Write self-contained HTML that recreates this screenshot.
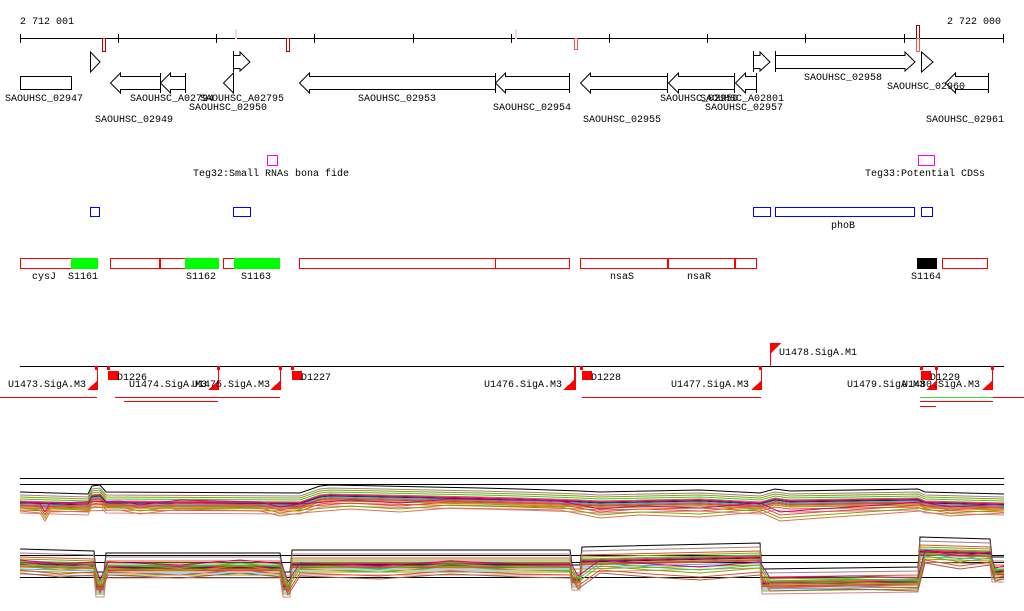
<!DOCTYPE html>
<html><head><meta charset="utf-8"><style>
html,body{margin:0;padding:0;background:#fff;width:1024px;height:611px;overflow:hidden}
svg{display:block}
text{font-family:"Liberation Mono",monospace;font-size:10px;fill:#000}
</style></head><body>
<svg width="1024" height="611" viewBox="0 0 1024 611" xmlns="http://www.w3.org/2000/svg">
<defs>
<path id="tb" d="M20,500 L88,502 L92,494 L100,493 L106,500 L300,501 L320,494 L330,493 L480,496 L520,497 L580,499 L600,500 L700,498 L760,501 L775,497 L790,499 L918,497 L925,500 L1004,502" fill="none"/>
<path id="bb" d="M20,563 L94,565 L96,586 L104,586 L106,567 L280,567 L283,586 L290,586 L292,564 L570,564 L572,579 L580,579 L582,561 L760,557 L762,583 L918,581 L920,551 L990,553 L992,571 L1004,571" fill="none"/>
<path id="tn" d="M20,505 L40,507 L45,515 L50,506 L120,504 L140,508 L180,503 L260,505 L280,510 L300,507 L350,503 L400,506 L450,502 L560,504 L600,512 L640,509 L700,511 L760,506 L780,515 L820,512 L880,508 L920,505 L950,510 L1004,507" fill="none"/>
<path id="bn" d="M20,570 L60,574 L94,572 L100,590 L108,572 L180,575 L240,570 L282,574 L288,592 L300,573 L380,576 L450,571 L520,574 L572,575 L578,586 L600,570 L650,574 L700,577 L760,572 L770,588 L850,586 L918,588 L925,560 L960,566 L990,562 L995,578 L1004,576" fill="none"/>
</defs>
<text x="20" y="24">2 712 001</text>
<text x="947" y="24">2 722 000</text>
<g stroke="#000" stroke-width="1" fill="none" shape-rendering="crispEdges">
<path d="M20,38.5H1004"/>
<path d="M20.5,34V43M118.5,34V43M216.5,34V43M314.5,34V43M413.5,34V43M511.5,34V43M609.5,34V43M707.5,34V43M805.5,34V43M904.5,34V43M1003.5,34V43"/>
</g>
<g shape-rendering="crispEdges" fill="none">
<rect x="235.5" y="29.5" width="1" height="9" stroke="#f8d8c8"/>
<rect x="515.5" y="29.5" width="1" height="9" stroke="#f8d8c8"/>
<rect x="102.5" y="38.5" width="3" height="13" stroke="#b00"/>
<rect x="286.5" y="38.5" width="3" height="13" stroke="#b00"/>
<rect x="574.5" y="38.5" width="3" height="11" stroke="#f54"/>
<rect x="916.5" y="25.5" width="3" height="13" stroke="#a00"/>
<rect x="916.5" y="38.5" width="3" height="13" stroke="#f54"/>
</g>
<g stroke="#000" fill="#fff" stroke-width="1">
<rect x="20.5" y="76.5" width="51" height="13"/>
<path d="M90.5,52V72L100,62Z"/>
<path d="M160.5,73V93M160.5,76.5H120.5V73L110.5,83L120.5,93V89.5H160.5"/>
<path d="M185.5,73V93M185.5,76.5H170.5V73L160.5,83L170.5,93V89.5H185.5"/>
<path d="M233.5,73V93L223.5,83Z"/>
<path d="M233.5,51V72M233.5,55.5H240V52L250,62L240,71V68.5H233.5"/>
<path d="M495.5,73V93M495.5,76.5H309.5V73L299.5,83L309.5,93V89.5H495.5"/>
<path d="M569.5,73V93M569.5,76.5H505.5V73L495.5,83L505.5,93V89.5H569.5"/>
<path d="M667.5,73V93M667.5,76.5H590.5V73L580.5,83L590.5,93V89.5H667.5"/>
<path d="M734.5,73V93M734.5,76.5H678.5V73L668.5,83L678.5,93V89.5H734.5"/>
<path d="M756.5,73V93M756.5,76.5H745.5V73L735.5,83L745.5,93V89.5H756.5"/>
<path d="M753.5,51V72M753.5,55.5H760V52L770,62L760,71V68.5H753.5"/>
<path d="M775.5,51V72M775.5,55.5H905V52L915,62L905,71V68.5H775.5"/>
<path d="M921.5,52V72L933,62Z"/>
<path d="M988.5,73V93M988.5,76.5H955.5V73L945.5,83L955.5,93V89.5H988.5"/>
</g>
<text x="5" y="101">SAOUHSC_02947</text>
<text x="130" y="101">SAOUHSC_A02794</text>
<text x="200" y="101">SAOUHSC_A02795</text>
<text x="189" y="110">SAOUHSC_02950</text>
<text x="95" y="122">SAOUHSC_02949</text>
<text x="358" y="101">SAOUHSC_02953</text>
<text x="493" y="110">SAOUHSC_02954</text>
<text x="583" y="122">SAOUHSC_02955</text>
<text x="660" y="101">SAOUHSC_02956</text>
<text x="700" y="101">SAOUHSC_A02801</text>
<text x="705" y="110">SAOUHSC_02957</text>
<text x="804" y="80">SAOUHSC_02958</text>
<text x="887" y="89">SAOUHSC_02960</text>
<text x="926" y="122">SAOUHSC_02961</text>

<g fill="none" shape-rendering="crispEdges">
<rect x="267.5" y="155.5" width="10" height="10" stroke="#f0f"/>
<rect x="918.5" y="155.5" width="16" height="10" stroke="#f0f"/>
<g stroke="#00f">
<rect x="90.5" y="207.5" width="9" height="9"/>
<rect x="233.5" y="207.5" width="17" height="9"/>
<rect x="753.5" y="207.5" width="17" height="9"/>
<rect x="775.5" y="207.5" width="139" height="9"/>
<rect x="921.5" y="207.5" width="11" height="9"/>
</g>
<g stroke="#f00">
<rect x="20.5" y="258.5" width="51" height="10"/>
<rect x="110.5" y="258.5" width="49" height="10"/>
<rect x="160.5" y="258.5" width="25" height="10"/>
<rect x="223.5" y="258.5" width="11" height="10"/>
<rect x="299.5" y="258.5" width="196" height="10"/>
<rect x="495.5" y="258.5" width="74" height="10"/>
<rect x="580.5" y="258.5" width="87" height="10"/>
<rect x="668.5" y="258.5" width="66" height="10"/>
<rect x="735.5" y="258.5" width="21" height="10"/>
<rect x="942.5" y="258.5" width="45" height="10"/>
</g>
</g>
<g fill="#0f0" shape-rendering="crispEdges">
<rect x="71" y="258" width="27" height="11"/>
<rect x="185" y="258" width="34" height="11"/>
<rect x="234" y="258" width="46" height="11"/>
</g>
<rect x="917" y="258" width="20" height="11" fill="#000"/>
<text x="193" y="176">Teg32:Small RNAs bona fide</text>
<text x="865" y="176">Teg33:Potential CDSs</text>
<text x="831" y="228">phoB</text>
<text x="32" y="279">cysJ</text>
<text x="68" y="279">S1161</text>
<text x="186" y="279">S1162</text>
<text x="241" y="279">S1163</text>
<text x="610" y="279">nsaS</text>
<text x="687" y="279">nsaR</text>
<text x="911" y="279">S1164</text>

<g shape-rendering="crispEdges">
<path d="M20,366.5H1004" stroke="#000"/>
<g stroke="#f00" fill="none">
<path d="M97.5,366V390M218.5,366V390M280.5,366V390M761.5,366V390M992.5,366V390M936.5,366V390M770.5,343V366"/>
<path d="M0,397.5H97M115,397.5H280M124,401.5H218M582,397.5H761M993,397.5H1024M920,401.5H993M920,406.5H936"/>
<path d="M920,397.5H993" stroke="#3d3"/>
</g>
<g fill="#f00">
<path d="M87,390H98V380Z"/><path d="M208,390H219V380Z"/><path d="M270,390H281V380Z"/>
<path d="M563,390H574V380Z"/><path d="M751,390H762V380Z"/><path d="M926,390H937V380Z"/><path d="M982,390H993V380Z"/>
<path d="M770,343H781L771,353Z"/>
<rect x="108" y="371" width="11" height="9"/><rect x="292" y="371" width="10" height="9"/>
<rect x="582" y="371" width="10" height="9"/><rect x="921" y="371" width="10" height="9"/>
<rect x="574" y="366" width="2" height="24"/>
<rect x="95" y="366" width="3" height="4"/><rect x="107" y="366" width="3" height="4"/><rect x="217" y="366" width="3" height="4"/>
<rect x="279" y="366" width="3" height="4"/><rect x="291" y="366" width="3" height="4"/><rect x="580" y="366" width="3" height="4"/>
<rect x="759" y="366" width="3" height="4"/><rect x="920" y="366" width="3" height="4"/><rect x="935" y="366" width="3" height="4"/><rect x="991" y="366" width="3" height="4"/>
</g>
</g>
<text x="8" y="387">U1473.SigA.M3</text>
<text x="129" y="387">U1474.SigA.M3</text>
<text x="192" y="387">U1475.SigA.M3</text>
<text x="484" y="387">U1476.SigA.M3</text>
<text x="671" y="387">U1477.SigA.M3</text>
<text x="847" y="387">U1479.SigA.M3</text>
<text x="902" y="387">U1480.SigA.M3</text>
<text x="117" y="380">D1226</text>
<text x="301" y="380">D1227</text>
<text x="591" y="380">D1228</text>
<text x="930" y="380">D1229</text>
<text x="779" y="355">U1478.SigA.M1</text>

<g shape-rendering="crispEdges" stroke="#000">
<path d="M20,478.5H1004M20,484.5H1004M20,555.5H1004M20,562.5H1004M20,577.5H1004"/>
</g>
<g stroke-width="1">
<use href="#tb" stroke="#000" transform="translate(0,-8)"/>
<use href="#tb" stroke="#a08080" transform="translate(0,-5)"/>
<use href="#tb" stroke="#90a000" transform="translate(0,-3)"/>
<use href="#tb" stroke="#3c3" transform="translate(0,-1)"/>
<use href="#tb" stroke="#e05030" transform="translate(0,1)"/>
<use href="#tb" stroke="#c08" transform="translate(0,2)"/>
<use href="#tb" stroke="#222" transform="translate(0,3)"/>
<use href="#tb" stroke="#4ae" transform="translate(0,4)"/>
<use href="#tb" stroke="#e05030" transform="translate(0,5)"/>
<use href="#tb" stroke="#906030" transform="translate(0,6)"/>
<use href="#tb" stroke="#ff8040" transform="translate(0,7)"/>
<use href="#tb" stroke="#90a000" transform="translate(0,8)"/>
<use href="#tb" stroke="#e05030" transform="translate(0,10)"/>
<use href="#tb" stroke="#c88" transform="translate(0,13)"/>
<use href="#tn" stroke="#e05030"/>
<use href="#tn" stroke="#90a000" transform="translate(0,3)"/>
<use href="#tn" stroke="#c08" transform="translate(0,-3)"/>
<use href="#tn" stroke="#e07050" transform="translate(0,6)"/>
<use href="#bb" stroke="#000" transform="translate(0,-14)"/>
<use href="#bb" stroke="#a08080" transform="translate(0,-10)"/>
<use href="#bb" stroke="#e05030" transform="translate(0,-6)"/>
<use href="#bb" stroke="#90a000" transform="translate(0,-4)"/>
<use href="#bb" stroke="#3c3" transform="translate(0,-2)"/>
<use href="#bb" stroke="#e05030" transform="translate(0,-1)"/>
<use href="#bb" stroke="#c08" transform="translate(0,0)"/>
<use href="#bb" stroke="#222" transform="translate(0,1)"/>
<use href="#bb" stroke="#ff8040" transform="translate(0,2)"/>
<use href="#bb" stroke="#906030" transform="translate(0,3)"/>
<use href="#bb" stroke="#e05030" transform="translate(0,4)"/>
<use href="#bb" stroke="#4ae" transform="translate(0,6)"/>
<use href="#bb" stroke="#90a000" transform="translate(0,8)"/>
<use href="#bb" stroke="#c88" transform="translate(0,11)"/>
<use href="#bn" stroke="#e05030"/>
<use href="#bn" stroke="#90a000" transform="translate(0,-4)"/>
<use href="#bn" stroke="#3c3" transform="translate(0,-7)"/>
<use href="#bn" stroke="#c08" transform="translate(0,-10)"/>
<use href="#bn" stroke="#a06040" transform="translate(0,3)"/>
</g>
</svg>
</body></html>
